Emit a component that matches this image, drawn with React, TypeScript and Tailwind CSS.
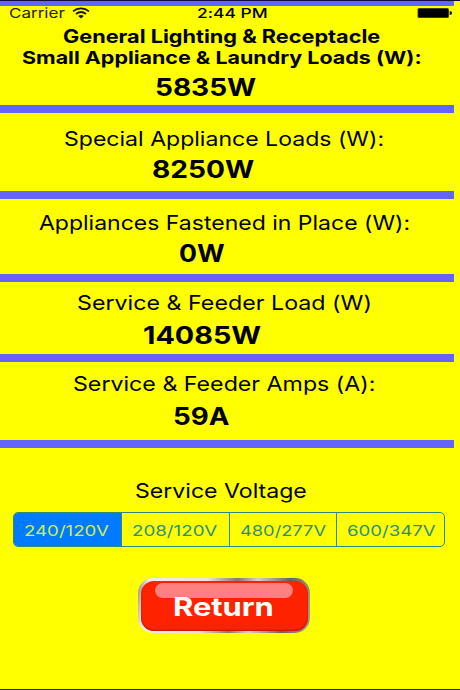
import React, { useLayoutEffect, useRef, useState } from 'react';
import clsx from 'clsx';

interface WideTextProps {
  text: string;
  left: number;
  width: number;
  className?: string;
}

// Single line of text stretched horizontally to the given width
const WideText = ({ text, left, width, className }: WideTextProps) => {
  const ref = useRef<HTMLSpanElement>(null);
  const [scale, setScale] = useState(1);

  useLayoutEffect(() => {
    if (ref.current) {
      setScale(width / ref.current.offsetWidth);
    }
  }, [text, width]);

  return (
    <div className={clsx('flex items-center', className)} style={{ paddingLeft: left }}>
      <span
        ref={ref}
        className="inline-block shrink-0 origin-left whitespace-nowrap"
        style={{ transform: `scaleX(${scale})` }}
      >
        {text}
      </span>
    </div>
  );
};

const Divider = () => <div className="h-2 w-[454px] shrink-0 bg-[#6464fa]" />;

const voltages = [
  { label: '240/120V', left: 9.5, width: 84.5 },
  { label: '208/120V', left: 10, width: 85 },
  { label: '480/277V', left: 10, width: 86.5 },
  { label: '600/347V', left: 10, width: 88 },
];

const StatusBar = () => (
  <div className="flex h-[14px] items-center text-[13.5px] leading-none">
    <WideText text="Carrier" left={8.5} width={55.5} className="w-[72px] shrink-0 pt-[2px] text-[#252500]" />
    <svg width="18" height="12" viewBox="0 0 18 12" fill="none" className="shrink-0">
      <path d="M1 4.3C5.5 0.5 12.5 0.5 17 4.3" stroke="#141400" strokeWidth="1.7" />
      <path d="M4 7C7 4.6 11 4.6 14 7" stroke="#141400" strokeWidth="1.7" />
      <path d="M6.2 8.9C7.9 7.6 10.1 7.6 11.8 8.9L9 11.4Z" fill="#141400" />
    </svg>
    <WideText text="2:44 PM" left={107} width={71} className="w-[327px] shrink-0 pt-[2px] font-medium" />
    <svg width="37" height="12" viewBox="0 0 37 12" className="shrink-0">
      <rect x="0.5" y="1" width="31.5" height="10" rx="1.5" fill="#555500" />
      <rect x="1.3" y="1.7" width="29.9" height="8.6" rx="0.8" fill="#000" />
      <path d="M32.6 4C34.5 4 35 5 35 6C35 7 34.5 8 32.6 8Z" fill="#141400" />
    </svg>
  </div>
);

const VoltagePicker = () => {
  const [selected, setSelected] = useState(0);

  return (
    <div className="ml-[13px] mt-[7px] flex h-[35px] w-[432px] overflow-hidden rounded-[5px] border border-[#2b8a80] text-[15px]">
      {voltages.map((v, i) => (
        <button
          key={v.label}
          onClick={() => setSelected(i)}
          className={clsx(
            'flex flex-1 items-center',
            i > 0 && 'border-l border-[#2b8a80]',
            selected === i ? 'bg-[#007aff] text-[#d2ee48]' : 'text-[#2b9080]'
          )}
        >
          <WideText text={v.label} left={v.left} width={v.width} className="pt-px" />
        </button>
      ))}
    </div>
  );
};

const ReturnButton = () => (
  <button className="relative ml-[138px] mt-[31px] block h-[55px] w-[172px] rounded-[15px] bg-[linear-gradient(100deg,#8a8578_0%,#f3ece4_6%,#eee6dc_38%,#85776a_55%,#d8cfc4_66%,#6e6256_84%,#aaa296_100%)] p-[2.5px]">
    <span className="block h-full w-full rounded-[13px] bg-[#ff2200] shadow-[inset_0_-1px_2px_0_#b81400]" />
    <span className="absolute left-[17px] top-[5px] h-[15px] w-[138px] rounded-full bg-[#ff8080]" />
    <span className="absolute inset-0 flex items-center pt-[3px] text-[25.5px] font-bold text-white">
      <WideText text="Return" left={35} width={100.5} />
    </span>
  </button>
);

const App = () => {
  return (
    <div
      className="flex h-[690px] w-[460px] flex-col overflow-hidden border-b border-[#2a2a10] bg-[#ffff00] text-[20px] leading-none text-black [font-feature-settings:'calt'_0]"
      style={{ fontFamily: 'Inter, "Liberation Sans", sans-serif' }}
    >
      <div className="h-px shrink-0 bg-[#101030]" />
      <div className="h-[5px] w-[454px] shrink-0 bg-[#6464fa]" />
      <StatusBar />

      <div className="h-[85px] pt-[5px] font-bold">
        <WideText text="General Lighting & Receptacle" left={63} width={317.5} className="h-[22px] text-[18.5px]" />
        <WideText text="Small Appliance & Laundry Loads (W):" left={22} width={399.5} className="h-[21px] text-[18px]" />
        <WideText text="5835W" left={155} width={101.5} className="h-[37px] pt-[2px] text-2xl leading-none" />
      </div>
      <Divider />

      <div className="h-[78px] pt-3">
        <WideText text="Special Appliance Loads (W):" left={63.5} width={320.5} className="h-7" />
        <WideText text="8250W" left={151.5} width={102} className="h-[31px] pt-[2px] text-2xl leading-none font-bold" />
      </div>
      <Divider />

      <div className="h-[75px] pt-2">
        <WideText text="Appliances Fastened in Place (W):" left={38.5} width={371.5} className="h-[30px] pt-px" />
        <WideText text="0W" left={179} width={45.5} className="h-[31px] pt-[2px] text-2xl leading-none font-bold" />
      </div>
      <Divider />

      <div className="h-[72px] pt-[5px]">
        <WideText text="Service & Feeder Load (W)" left={76.5} width={295} className="h-[30px] pt-px" />
        <WideText text="14085W" left={142.5} width={118.5} className="h-[35px] pt-[3px] text-2xl leading-none font-bold" />
      </div>
      <Divider />

      <div className="h-[78px] pt-[6px]">
        <WideText text="Service & Feeder Amps (A):" left={72.5} width={302.5} className="h-[30px] pt-px" />
        <WideText text="59A" left={173} width={56.5} className="h-[35px] pt-[3px] text-2xl leading-none font-bold" />
      </div>
      <Divider />

      <WideText text="Service Voltage" left={135} width={172} className="mt-[27px] h-[30px] pt-px" />
      <VoltagePicker />
      <ReturnButton />
    </div>
  );
};

export default App;
